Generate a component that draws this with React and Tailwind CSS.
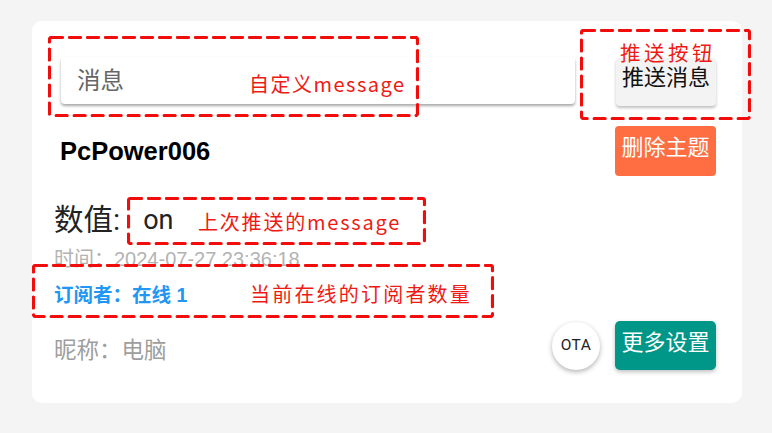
import React from 'react'

const cjk = "font-['Roboto','Noto_Sans_CJK_SC',sans-serif]"
const note = "font-['Noto_Sans_CJK_SC',sans-serif] text-[#ee1a14]"

const DashBox = ({ className, w, h }) => (
    <div className={`absolute pointer-events-none ${className}`}>
        <svg width={w} height={h}>
            <rect x="1.5" y="1.5" width={w - 3} height={h - 3} rx="2" fill="none"
                stroke="#f20d0d" strokeWidth="3.2" strokeDasharray="11 7" strokeLinecap="round" />
        </svg>
    </div>
)

const App = () => {
    return (
        <div className={`w-[772px] h-[433px] bg-[#f4f4f4] pt-[21px] pl-[32px] ${cjk}`}>
            <div className="relative w-[710px] h-[382px] bg-white rounded-[10px] pt-[36px] pl-[22px] pr-[26px]">

                {/* message input + push */}
                <div className="flex items-start">
                    <div className="ml-[7px] w-[514px] h-[47px] rounded-[4px] bg-white shadow-[0_2px_3px_rgba(0,0,0,0.35)] flex items-center pl-[16px]">
                        <span className="text-[23.5px] leading-[30px] text-[#666]">消息</span>
                    </div>
                    <button className="ml-auto mt-[1px] w-[100px] h-[48px] rounded-[4px] bg-[#f3f3f3] shadow-[0_2px_3px_rgba(0,0,0,0.25)] text-[22px] leading-[28px] text-[#111] pb-[8px] whitespace-nowrap">
                        推送消息
                    </button>
                </div>

                {/* title */}
                <div className="flex items-center mt-[20px] h-[50px]">
                    <h2 className="ml-[6px] text-[25.5px] leading-[30px] font-bold text-black font-['Liberation_Sans',sans-serif]">PcPower006</h2>
                    <button className="ml-auto w-[101px] h-[50px] rounded-[4px] bg-[#ff6e42] text-white text-[22px] leading-[28px] pb-[7px] whitespace-nowrap">
                        删除主题
                    </button>
                </div>

                <div className="mt-[29px] flex items-center h-[30px] text-[#222]">
                    <span className="text-[29.5px] leading-[30px]">数值:</span>
                    <span className="ml-[23px] text-[27px] leading-[30px]">on</span>
                </div>

                <div className="mt-[14px] h-[20px] leading-[20px] text-[20px] text-[#b3b3b3] font-['Liberation_Sans','Noto_Sans_CJK_SC',sans-serif] whitespace-nowrap">
                    时间：2024-07-27 23:36:18
                </div>

                <div className="mt-[16px] h-[20px] leading-[20px] text-[19.5px] font-bold text-[#2196f3] font-['Liberation_Sans','Noto_Sans_CJK_SC',sans-serif] whitespace-nowrap">
                    订阅者：在线 1
                </div>

                <div className="mt-[16px] flex items-center h-[49px]">
                    <span className="mt-[8px] text-[22.5px] leading-[28px] text-[#9e9e9e]">昵称：电脑</span>
                    <div className="ml-auto w-[48px] h-[48px] rounded-full bg-white shadow-[0_2px_5px_rgba(0,0,0,0.3)] flex items-center justify-center text-[15.5px] text-[#222] tracking-[0.5px]">
                        OTA
                    </div>
                    <button className="ml-[15px] w-[101px] h-[49px] rounded-[5px] bg-[#009688] text-white text-[22px] leading-[28px] shadow-[0_2px_4px_rgba(0,0,0,0.25)] pb-[5px] whitespace-nowrap">
                        更多设置
                    </button>
                </div>

                {/* annotations */}
                <span className={`absolute left-[217px] top-[49px] text-[20px] leading-[28px] tracking-[1.5px] whitespace-nowrap ${note}`}>自定义message</span>
                <span className={`absolute left-[588px] top-[17px] text-[20.5px] leading-[28px] tracking-[3.5px] whitespace-nowrap ${note}`}>推送按钮</span>
                <span className={`absolute left-[166px] top-[187px] text-[20px] leading-[28px] tracking-[1.8px] whitespace-nowrap ${note}`}>上次推送的message</span>
                <span className={`absolute left-[218px] top-[259px] text-[20px] leading-[28px] tracking-[2.2px] whitespace-nowrap ${note}`}>当前在线的订阅者数量</span>

                <DashBox className="left-[16px] top-[15px]" w={371} h={81} />
                <DashBox className="left-[548px] top-[8px]" w={171} h={91} />
                <DashBox className="left-[95px] top-[176px]" w={299} h={48} />
                <DashBox className="left-[0px] top-[243px]" w={462} h={54} />
            </div>
        </div>
    )
}

export default App
